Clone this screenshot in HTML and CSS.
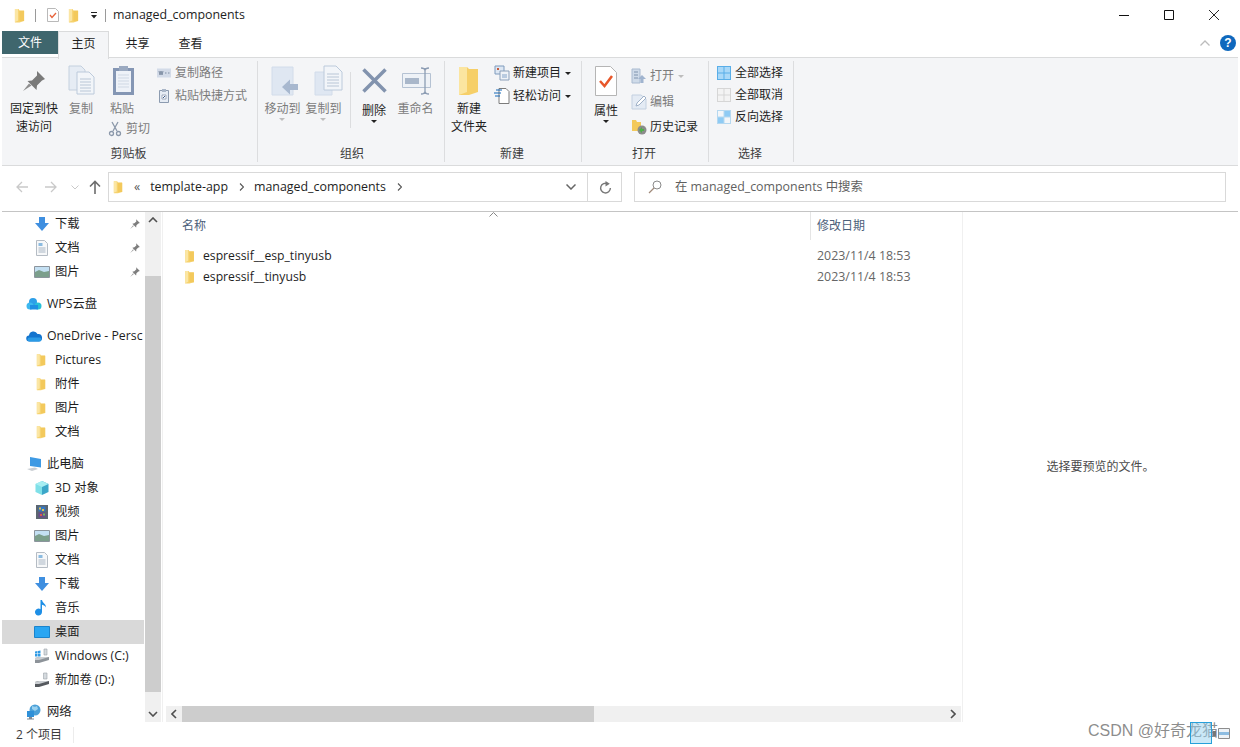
FILE: index.html
```html
<!DOCTYPE html>
<html lang="zh-CN">
<head>
  <meta charset="UTF-8">
  <title>managed_components</title>
  <link rel="stylesheet" href="styles.css">
</head>
<body>
  <svg class="defs" width="0" height="0">
    <symbol id="folder" viewBox="0 0 12 16">
      <path d="M1 1h4l1 1.500h5v11.500l-5 1.500H1z" fill="#f6d26e"/>
      <path d="M1 1h3.500v12.500L1 15z" fill="#fbe6a4"/>
      <path d="M6 3h5v11H6z" fill="#f3c95c"/>
    </symbol>
    <symbol id="pin" viewBox="0 0 16 16">
      <path d="M9.500 1.500l5 5-2 .7-2.600 2.600-.4 2.700-5-5 2.700-.4 2.600-2.600z" fill="#7d7d7d"/>
      <path d="M5.500 9.500L1.500 14.500l5-4z" fill="#9a9a9a"/>
    </symbol>
    <symbol id="arrow-down" viewBox="0 0 16 16">
      <path d="M5 1h6v6h4l-7 8-7-8h4z" fill="#3f8fe0"/>
    </symbol>
    <symbol id="doc" viewBox="0 0 16 16">
      <path d="M2.500 .5h8l3 3v12h-11z" fill="#f7f8f9" stroke="#b5bcc4"/>
      <path d="M4.500 8h7M4.500 10h7M4.500 12h7" stroke="#a9b6c4"/>
      <path d="M4.500 3h4v3h-4z" fill="#8bbbe0"/>
    </symbol>
    <symbol id="picture" viewBox="0 0 16 16">
      <path d="M.5 2.500h15v11H.5z" fill="#e8eef3" stroke="#8c959d"/>
      <path d="M1 3h14v5H1z" fill="#c4e0f3"/>
      <path d="M1 8l4-2 5 2 5-1v6H1z" fill="#7c9f8c"/>
    </symbol>
    <symbol id="cloud-wps" viewBox="0 0 16 16">
      <circle cx="7" cy="6" r="4" fill="#2d9fe8"/>
      <circle cx="12" cy="10" r="3.500" fill="#28c0d8"/>
      <circle cx="4" cy="10" r="3.500" fill="#3db8f0"/>
      <path d="M4 9h8v4.500H4z" fill="#1f8fe3"/>
    </symbol>
    <symbol id="cloud-one" viewBox="0 0 16 16">
      <path d="M3.500 13.500a3 3 0 0 1-.5-6 4.500 4.500 0 0 1 8.500-1.500 3.800 3.800 0 0 1 1.500 7.500z" fill="#1475cf"/>
      <path d="M3.500 13.500a2 2 0 0 1 0-4h10.300a2 2 0 0 1-.8 4z" fill="#2b9be6"/>
    </symbol>
    <symbol id="pc" viewBox="0 0 16 16">
      <path d="M4 1l11 2v8.500L4 10z" fill="#3e9ae4"/>
      <path d="M1 13l8-1.500 3 1.500-6 2z" fill="#c9ced3"/>
    </symbol>
    <symbol id="cube" viewBox="0 0 16 16">
      <path d="M8 1l6.500 3v8L8 15z" fill="#3ba7c9"/>
      <path d="M8 1L1.500 4v8L8 15z" fill="#7fe0e8"/>
      <path d="M8 1l6.500 3L8 7 1.500 4z" fill="#a6eef2"/>
    </symbol>
    <symbol id="film" viewBox="0 0 16 16">
      <path d="M2 1h12v14H2z" fill="#5c6670"/>
      <path d="M4.500 2.500h7v5h-7z" fill="#3477c2"/>
      <path d="M4.500 8.500h7v5h-7z" fill="#6b4b8c"/>
      <path d="M5 3.500h2v2H5zM8 5h2v2H8z" fill="#e2c14a"/>
      <path d="M6 10h2v2H6z" fill="#d75a4a"/>
      <path d="M9 9.500h2v2H9z" fill="#6fbf5b"/>
    </symbol>
    <symbol id="note" viewBox="0 0 16 16">
      <path d="M8 0v12a3.500 3.500 0 1 1-1.500-2.800V0H8c.5 3 4 3.500 4 7.500-1-2-3-2.800-4-2.800" fill="#1e8fe6"/>
    </symbol>
    <symbol id="desktop" viewBox="0 0 16 16">
      <path d="M.5 2.500h15v11H.5z" fill="#2aa6f2" stroke="#1b84cc"/>
    </symbol>
    <symbol id="drive-c" viewBox="0 0 16 16">
      <path d="M1 3.500l2.500-.5v2.500H1zM4 3l2.500-.5v3H4zM1 6h2.500v2.500H1zM4 6h2.500v2.500H4z" fill="#2f9ae4"/>
      <path d="M10 1h3v6h-3z" fill="#d5dade" stroke="#9aa2a9" stroke-width=".6"/>
      <path d="M1 10l4-1h10v3L5 15H1z" fill="#8d9399"/>
      <path d="M1 10l4-1h10L5 12H1z" fill="#c9cdd1"/>
    </symbol>
    <symbol id="drive-d" viewBox="0 0 16 16">
      <path d="M9.500 1h3.500v6H9.500z" fill="#d5dade" stroke="#9aa2a9" stroke-width=".6"/>
      <path d="M1 10l4-1h10v3L5 15H1z" fill="#55595e"/>
      <path d="M1 10l4-1h10L5 12H1z" fill="#c9cdd1"/>
    </symbol>
    <symbol id="globe" viewBox="0 0 16 16">
      <circle cx="9" cy="6" r="5.500" fill="#4ba0d8"/>
      <path d="M6 2c2 1 4 1 5 0l1 3-3 2-3-2z" fill="#9ad1ef"/>
      <path d="M1 7h7v6H1z" fill="#2f90d8"/>
      <path d="M3 13h3v1.500H3zM1 14.500h7v1H1z" fill="#7f8a94"/>
    </symbol>
  </svg>

  <header class="titlebar">
    <svg class="qa-folder"><use href="#folder"/></svg>
    <span class="qa-sep"></span>
    <svg class="qa-check" viewBox="0 0 12 14">
      <path d="M.5.5h8l3 3v10H.5z" fill="#fff" stroke="#b9b9b9"/>
      <path d="M3 7l2 2.500L9 5" fill="none" stroke="#e8633a" stroke-width="1.300"/>
    </svg>
    <svg class="qa-folder gap-l"><use href="#folder"/></svg>
    <svg class="qa-drop" viewBox="0 0 8 8"><path d="M1 1h6v1H1zM1 4h6L4 7.500z" fill="#222"/></svg>
    <span class="qa-sep"></span>
    <span class="title">managed_components</span>
    <div class="winbtns">
      <svg viewBox="0 0 10 10"><path d="M0 5.500h10" stroke="#111"/></svg>
      <svg viewBox="0 0 10 10"><path d="M.5.5h9v9h-9z" fill="none" stroke="#111"/></svg>
      <svg viewBox="0 0 10 10"><path d="M0 0l10 10M10 0L0 10" stroke="#111" stroke-width=".9"/></svg>
    </div>
  </header>

  <nav class="tabs">
    <span class="tab tab-file">文件</span>
    <span class="tab tab-active">主页</span>
    <span class="tab">共享</span>
    <span class="tab">查看</span>
    <div class="tabs-right">
      <svg class="collapse" viewBox="0 0 10 6"><path d="M.5 5.500L5 1l4.500 4.500" fill="none" stroke="#bcbcbc" stroke-width="1.300"/></svg>
      <span class="help">?</span>
    </div>
  </nav>

  <section class="ribbon">
    <div class="group g-clip">
      <div class="group-body">
        <div class="big w-pin">
          <svg class="big-icon" viewBox="0 0 32 32">
            <path d="M19 6l8 8-3 1.500-5 5-.5 4.500-9-9 4.500-.5 5-5z" fill="#7a7a7a"/>
            <path d="M11 18.500L5 26l8.500-5.500z" fill="#8d8d8d"/>
          </svg>
          <span>固定到快<br>速访问</span>
        </div>
        <div class="big w-copy dim">
          <svg class="big-icon" viewBox="0 0 32 32">
            <path d="M4 1h12l4 4v20H4z" fill="#e6ecf4" stroke="#c4d0de"/>
            <path d="M12 7h12l5 5v17H12z" fill="#f2f5f9" stroke="#bccadb"/>
            <path d="M15 14h11M15 17h11M15 20h11M15 23h11M15 26h11" stroke="#b9c6d6"/>
          </svg>
          <span>复制</span>
        </div>
        <div class="paste-col">
          <div class="big w-paste dim">
            <svg class="big-icon" viewBox="0 0 32 32">
              <path d="M7 3h21v27H7z" fill="#8496b4"/>
              <path d="M10 6h15v21H10z" fill="#eef2f8"/>
              <path d="M12 10h11M12 13h11M12 16h11M12 19h11M12 22h11" stroke="#cfd8e4"/>
              <path d="M13 1h9v5h-9z" fill="#9aa9c0"/>
            </svg>
            <span>粘贴</span>
          </div>
          <div class="small dim cut">
            <svg viewBox="0 0 16 16"><path d="M5 1l5 9M11 1l-5 9" stroke="#8b98aa" stroke-width="1.300"/><circle cx="4.500" cy="12.500" r="2" fill="none" stroke="#8b98aa" stroke-width="1.300"/><circle cx="11.500" cy="12.500" r="2" fill="none" stroke="#8b98aa" stroke-width="1.300"/></svg>
            <span>剪切</span>
          </div>
        </div>
        <div class="small-col col-clip">
          <div class="small dim">
            <svg viewBox="0 0 16 16"><path d="M1 3.500h14v9H1z" fill="#d3dbe8"/><path d="M3 6l1 4 1-4 1 4 1-4M9 8h1.500M12 8h1.500" fill="none" stroke="#7f8ea3"/></svg>
            <span>复制路径</span>
          </div>
          <div class="small dim">
            <svg viewBox="0 0 16 16"><path d="M3.500 2.500h9v12h-9z" fill="#e6ecf4" stroke="#8c9bb0"/><path d="M6 1h4v3H6z" fill="#a9b6c8"/><path d="M6 7h4v4H6z" fill="#fff" stroke="#7f8ea3" stroke-width=".7"/><path d="M7 10l2-2" stroke="#3a5a8c"/></svg>
            <span>粘贴快捷方式</span>
          </div>
        </div>
      </div>
      <div class="group-label">剪贴板</div>
    </div>

    <div class="group g-org">
      <div class="group-body">
        <div class="big w-move dim">
          <svg class="big-icon" viewBox="0 0 32 32">
            <path d="M5 2h21v28H5z" fill="#dfe7f2" stroke="#d2dcea"/>
            <path d="M15 22l8-7.500v4.500h8v6h-8v4.500z" fill="#a8b8cf"/>
          </svg>
          <span>移动到<i class="caret caret-dim"></i></span>
        </div>
        <div class="big w-move dim">
          <svg class="big-icon" viewBox="0 0 32 32">
            <path d="M7 7h17v23H7z" fill="#dfe7f2" stroke="#d2dcea"/>
            <path d="M16 1h12l6 6v18H16z" fill="#f2f5f9" stroke="#bccadb"/>
            <path d="M19 9h12M19 12h12M19 15h12M19 18h12M19 21h12" stroke="#b9c6d6"/>
          </svg>
          <span>复制到<i class="caret caret-dim"></i></span>
        </div>
        <span class="vsep"></span>
        <div class="big w-del">
          <svg class="big-icon" viewBox="0 0 32 32"><path d="M5.500 4.500l22 22M27.500 4.500l-22 22" stroke="#8293ae" stroke-width="3.500"/></svg>
          <span>删除<i class="caret"></i></span>
        </div>
        <div class="big w-move w-rename dim">
          <svg class="big-icon" viewBox="0 0 32 32">
            <path d="M2.500 8.500h28v14h-28z" fill="#eef2f7" stroke="#b5c2d3"/>
            <path d="M5 13h14v6H5z" fill="#a9b7ca"/>
            <path d="M25 3v26M21 3c2 0 4 1 4 3 0-2 2-3 4-3M21 29c2 0 4-1 4-3 0 2 2 3 4 3" fill="none" stroke="#8d9db4" stroke-width="1.300"/>
          </svg>
          <span>重命名</span>
        </div>
      </div>
      <div class="group-label">组织</div>
    </div>

    <div class="group g-new">
      <div class="group-body">
        <div class="big w-new">
          <svg class="big-icon" viewBox="0 0 24 32">
            <path d="M2 2h8l2 2h9v23l-9 3H2z" fill="#f6cf68"/>
            <path d="M2 2h8v25l-8 3z" fill="#fbe5a0"/>
          </svg>
          <span>新建<br>文件夹</span>
        </div>
        <div class="small-col col-new">
          <div class="small">
            <svg viewBox="0 0 16 16"><path d="M1 1h9v8H1z" fill="#dde7f3" stroke="#7f9bbd"/><path d="M3 3h2v2H3z" fill="#c85a3a"/><path d="M6 6h9v9H6z" fill="#eef2f7" stroke="#8ba0ba"/><path d="M8 9h5v4H8z" fill="#b9cbe0"/></svg>
            <span>新建项目</span><i class="caret caret-side"></i>
          </div>
          <div class="small">
            <svg viewBox="0 0 16 16"><path d="M5 .5h7l3 3v12H5z" fill="#fff" stroke="#7c7c7c"/><path d="M0 5h7M1 8h5M2 2h6" stroke="#1569b8" stroke-width="1.200"/></svg>
            <span>轻松访问</span><i class="caret caret-side"></i>
          </div>
        </div>
      </div>
      <div class="group-label">新建</div>
    </div>

    <div class="group g-open">
      <div class="group-body">
        <div class="big w-prop">
          <svg class="big-icon" viewBox="0 0 24 32">
            <path d="M1.500 1.500h15l6 6v23h-21z" fill="#fff" stroke="#b5b5b5"/>
            <path d="M6 16l4.500 5L18 11" fill="none" stroke="#e8572a" stroke-width="2.500"/>
          </svg>
          <span>属性<i class="caret"></i></span>
        </div>
        <div class="small-col col-open">
          <div class="small dim">
            <svg viewBox="0 0 16 16"><path d="M1 1h8v14H1z" fill="#cfdbe9" stroke="#a9bad0"/><path d="M3 4h4M3 7h4M3 10h4" stroke="#7f93ad"/><path d="M11 7l4 4h-2.500v4h-3v-4H7z" fill="#a0b4cf"/></svg>
            <span>打开</span><i class="caret caret-side caret-dim"></i>
          </div>
          <div class="small dim">
            <svg viewBox="0 0 16 16"><path d="M1 1h9l5 4v10H1z" fill="#e4ebf4" stroke="#c3d0e0"/><path d="M5 12l1-3 7-7 2 2-7 7z" fill="#fff" stroke="#9fb1c8"/></svg>
            <span>编辑</span>
          </div>
          <div class="small">
            <svg viewBox="0 0 16 16"><path d="M1 1h4l1 2h4v9H1z" fill="#f3c95c"/><circle cx="11" cy="11" r="4.500" fill="#8c8c8c"/><path d="M8 11l3-3v2h2v2h-2v2z" fill="#4fb04a"/></svg>
            <span>历史记录</span>
          </div>
        </div>
      </div>
      <div class="group-label">打开</div>
    </div>

    <div class="group g-sel">
      <div class="group-body">
        <div class="small-col col-sel">
          <div class="small">
            <svg viewBox="0 0 14 14"><path d="M0 0h14v14H0z" fill="#59aee8"/><path d="M1 1h5.500v5.500H1zM7.500 1H13v5.500H7.500zM1 7.500h5.500V13H1zM7.500 7.500H13V13H7.500z" fill="#a9d8f8"/></svg>
            <span>全部选择</span>
          </div>
          <div class="small">
            <svg viewBox="0 0 14 14"><path d="M0 0h14v14H0z" fill="#d6d6d6"/><path d="M1 1h5.500v5.500H1zM7.500 1H13v5.500H7.500zM1 7.500h5.500V13H1zM7.500 7.500H13V13H7.500z" fill="#f3f3f3"/></svg>
            <span>全部取消</span>
          </div>
          <div class="small">
            <svg viewBox="0 0 14 14"><path d="M0 0h14v14H0z" fill="#b5d8f0"/><path d="M1 1h5.500v5.500H1zM7.500 7.500H13V13H7.500z" fill="#f3f6f9"/><path d="M7.500 1H13v5.500H7.500zM1 7.500h5.500V13H1z" fill="#8fcbf4"/></svg>
            <span>反向选择</span>
          </div>
        </div>
      </div>
      <div class="group-label">选择</div>
    </div>
  </section>

  <div class="addressbar">
    <svg class="nav nav-back" viewBox="0 0 12 12"><path d="M12 6H1M6 1L1 6l5 5" fill="none" stroke="#c9c9c9" stroke-width="1.300"/></svg>
    <svg class="nav nav-fwd" viewBox="0 0 12 12"><path d="M0 6h11M6 1l5 5-5 5" fill="none" stroke="#c9c9c9" stroke-width="1.300"/></svg>
    <svg class="nav nav-drop" viewBox="0 0 8 5"><path d="M.5.5L4 4 7.500.5" fill="none" stroke="#c9c9c9"/></svg>
    <svg class="nav nav-up" viewBox="0 0 12 14"><path d="M6 14V1.500M1 6.500l5-5 5 5" fill="none" stroke="#6d6d6d" stroke-width="1.600"/></svg>
    <div class="address">
      <svg class="crumb-folder"><use href="#folder"/></svg>
      <span class="crumb-more">«</span>
      <span>template-app</span>
      <svg class="crumb-sep" viewBox="0 0 5 8"><path d="M1 .5L4.500 4 1 7.500" fill="none" stroke="#555" stroke-width="1.100"/></svg>
      <span>managed_components</span>
      <svg class="crumb-sep" viewBox="0 0 5 8"><path d="M1 .5L4.500 4 1 7.500" fill="none" stroke="#555" stroke-width="1.100"/></svg>
      <svg class="addr-drop" viewBox="0 0 10 6"><path d="M.5.5L5 5 9.500.5" fill="none" stroke="#666" stroke-width="1.500"/></svg>
      <span class="addr-div"></span>
      <svg class="addr-refresh" viewBox="0 0 12 12"><path d="M10.500 6.500A4.500 4.500 0 1 1 8 2.500" fill="none" stroke="#777" stroke-width="1.300"/><path d="M6 0l4 2.500L6 5z" fill="#777"/></svg>
    </div>
    <div class="search">
      <svg viewBox="0 0 14 14"><circle cx="9" cy="5" r="4" fill="none" stroke="#8a8a8a"/><path d="M6 8l-5 5" stroke="#a08a7a" stroke-width="1.200"/></svg>
      <span>在 managed_components 中搜索</span>
    </div>
  </div>

  <main class="main">
    <aside class="tree">
      <ul class="tree-list">
        <li class="sub"><svg><use href="#arrow-down"/></svg>下载<svg class="tree-pin"><use href="#pin"/></svg></li>
        <li class="sub"><svg><use href="#doc"/></svg>文档<svg class="tree-pin"><use href="#pin"/></svg></li>
        <li class="sub"><svg><use href="#picture"/></svg>图片<svg class="tree-pin"><use href="#pin"/></svg></li>
        <li class="root"><svg><use href="#cloud-wps"/></svg>WPS云盘</li>
        <li class="root"><svg><use href="#cloud-one"/></svg>OneDrive - Persc</li>
        <li class="sub"><svg class="tree-folder"><use href="#folder"/></svg>Pictures</li>
        <li class="sub"><svg class="tree-folder"><use href="#folder"/></svg>附件</li>
        <li class="sub"><svg class="tree-folder"><use href="#folder"/></svg>图片</li>
        <li class="sub"><svg class="tree-folder"><use href="#folder"/></svg>文档</li>
        <li class="root"><svg><use href="#pc"/></svg>此电脑</li>
        <li class="sub"><svg><use href="#cube"/></svg>3D 对象</li>
        <li class="sub"><svg><use href="#film"/></svg>视频</li>
        <li class="sub"><svg><use href="#picture"/></svg>图片</li>
        <li class="sub"><svg><use href="#doc"/></svg>文档</li>
        <li class="sub"><svg><use href="#arrow-down"/></svg>下载</li>
        <li class="sub"><svg><use href="#note"/></svg>音乐</li>
        <li class="sub selected"><svg><use href="#desktop"/></svg>桌面</li>
        <li class="sub"><svg><use href="#drive-c"/></svg>Windows (C:)</li>
        <li class="sub"><svg><use href="#drive-d"/></svg>新加卷 (D:)</li>
        <li class="root"><svg><use href="#globe"/></svg>网络</li>
      </ul>
    </aside>
    <div class="vscroll">
      <span class="sb-btn"><svg viewBox="0 0 10 6"><path d="M1 5l4-4 4 4" fill="none" stroke="#505050" stroke-width="1.600"/></svg></span>
      <span class="vscroll-gap"></span>
      <span class="vscroll-thumb"></span>
      <span class="sb-btn"><svg viewBox="0 0 10 6"><path d="M1 1l4 4 4-4" fill="none" stroke="#505050" stroke-width="1.600"/></svg></span>
    </div>
    <div class="files">
      <div class="files-head">
        <span class="col-name">名称</span>
        <svg class="sort" viewBox="0 0 9 5"><path d="M.5 4.500L4.500.5l4 4" fill="none" stroke="#888"/></svg>
        <span class="col-date">修改日期</span>
      </div>
      <div class="files-rows">
        <div class="file"><svg><use href="#folder"/></svg><span class="file-name">espressif__esp_tinyusb</span><span class="file-date">2023/11/4 18:53</span></div>
        <div class="file"><svg><use href="#folder"/></svg><span class="file-name">espressif__tinyusb</span><span class="file-date">2023/11/4 18:53</span></div>
      </div>
      <div class="hscroll">
        <span class="sb-btn"><svg viewBox="0 0 6 10"><path d="M5 1L1 5l4 4" fill="none" stroke="#505050" stroke-width="1.600"/></svg></span>
        <span class="hscroll-thumb"></span>
        <span class="hscroll-gap"></span>
        <span class="sb-btn"><svg viewBox="0 0 6 10"><path d="M1 1l4 4-4 4" fill="none" stroke="#505050" stroke-width="1.600"/></svg></span>
      </div>
    </div>
    <div class="preview">选择要预览的文件。</div>
  </main>

  <footer class="status">
    <span class="count">2 个项目</span>
    <span class="status-div"></span>
  </footer>

  <div class="watermark">CSDN @好奇龙猫</div>
  <div class="view-toggle">
    <span class="toggle-on"></span>
    <svg viewBox="0 0 18 11"><path d="M1 3h3v5H1z" fill="#777"/><path d="M6.500.5h11v10h-11z" fill="#eef3f7" stroke="#8d8d8d"/><path d="M7 4h10v3H7z" fill="#8dbde2"/></svg>
  </div>
</body>
</html>
```

FILE: styles.css
```css
* {
  box-sizing: border-box;
}

html, body {
  height: 100%;
}

body {
  margin: 0;
  padding: 0 2px;
  display: flex;
  flex-direction: column;
  overflow: hidden;
  position: relative;
  background-color: white;
  color: #1e1e1e;
  font-family: "Open Sans", "Noto Sans CJK SC", sans-serif;
  font-size: 12px;
  line-height: 18px;
}

svg {
  display: block;
  flex: none;
}

.defs {
  position: absolute;
}

/* title bar */
.titlebar {
  height: 30px;
  flex: none;
  display: flex;
  align-items: center;
  padding-left: 12px;
}

.qa-folder {
  width: 11px;
  height: 15px;
}

.qa-folder.gap-l {
  margin-left: 9px;
}

.qa-sep {
  width: 1px;
  height: 13px;
  background-color: #9a9a9a;
  margin: 0 11px 0 10px;
}

.qa-check {
  width: 12px;
  height: 14px;
}

.qa-drop {
  width: 8px;
  height: 8px;
  margin-left: 11px;
}

.qa-drop + .qa-sep {
  margin: 0 7px 0 7px;
}

.title {
  font-size: 12.4px;
}

.winbtns {
  margin-left: auto;
  display: flex;
  gap: 35px;
  padding-right: 19px;
}

.winbtns svg {
  width: 10px;
  height: 10px;
}

/* tabs */
.tabs {
  height: 28px;
  flex: none;
  display: flex;
  align-items: stretch;
  border-bottom: 1px solid #dadbdc;
}

.tab {
  width: 53px;
  display: flex;
  align-items: center;
  justify-content: center;
}

.tab-file {
  width: 56px;
  height: 23px;
  margin-top: 1px;
  background-color: #3f666d;
  color: white;
}

.tab-active {
  width: 51px;
  height: 28px;
  margin-top: 1px;
  padding-bottom: 3px;
  background-color: #f4f5f7;
  border: 1px solid #dadbdc;
  border-bottom: none;
  z-index: 1;
  margin-right: 2px;
}

.tabs-right {
  margin-left: auto;
  display: flex;
  align-items: center;
  gap: 10px;
  padding: 0 2px 1px 0;
}

.collapse {
  width: 10px;
  height: 6px;
}

.help {
  width: 16px;
  height: 16px;
  border-radius: 50%;
  background-color: #0f68bd;
  color: white;
  font: bold 12px/16px "Liberation Sans", sans-serif;
  text-align: center;
}

/* ribbon */
.ribbon {
  height: 108px;
  flex: none;
  display: flex;
  background-color: #f4f5f7;
  border-bottom: 1px solid #dadbdc;
  padding-top: 3px;
}

.group {
  height: 101px;
  display: flex;
  flex-direction: column;
  border-right: 1px solid #dcdddf;
}

.group-body {
  flex: 1;
  display: flex;
  min-height: 0;
}

.group-label {
  height: 21px;
  text-align: center;
  color: #3c3c3c;
  line-height: 26px;
  padding-right: 2px;
}

.g-clip {
  width: 256px;
  padding-left: 6px;
}

.g-clip .group-label {
  padding-right: 8px;
}

.g-org {
  width: 187px;
  padding-left: 4px;
}

.g-new {
  width: 137px;
}

.g-open {
  width: 127px;
}

.g-sel {
  width: 85px;
}

.big {
  display: flex;
  flex-direction: column;
  align-items: center;
  text-align: center;
  flex: none;
}

.big-icon {
  width: 32px;
  height: 32px;
  margin: 4px 0 3px;
  overflow: visible;
}

.dim {
  color: #7c7c7c;
}

.w-pin {
  width: 52px;
}

.w-copy {
  width: 42px;
}

.w-paste {
  width: 40px;
}

.w-move {
  width: 41px;
}

.w-del {
  width: 36px;
}

.w-del .big-icon {
  margin-bottom: 5px;
}

.w-rename {
  margin-left: 3px;
}

.w-new {
  width: 46px;
  margin-left: 1px;
}

.w-new .big-icon {
  width: 24px;
}

.w-prop {
  width: 46px;
  margin-left: 1px;
}

.w-prop .big-icon {
  width: 24px;
  height: 32px;
  margin-bottom: 5px;
}

.paste-col {
  width: 50px;
  flex: none;
}

.cut {
  margin: 2px 0 0 5px;
  white-space: nowrap;
}

.vsep {
  width: 1px;
  height: 56px;
  margin: 11px 5px 0 6px;
  background-color: #dcdddf;
  flex: none;
}

.small-col {
  display: flex;
  flex-direction: column;
  padding-top: 1px;
  gap: 5px;
  white-space: nowrap;
}

.col-clip {
  margin-left: 4px;
  padding-top: 3px;
}

.col-new {
  margin-left: 2px;
  padding-top: 3px;
}

.col-open {
  margin-left: 2px;
  padding-top: 6px;
  gap: 7.5px;
}

.col-sel {
  margin-left: 8px;
  gap: 4px;
  padding-top: 3px;
}

.small {
  display: flex;
  align-items: center;
  gap: 3px;
  height: 18px;
}

.small svg {
  width: 16px;
  height: 16px;
}

.col-sel .small svg {
  width: 14px;
  height: 14px;
  margin-right: 1px;
}

.caret {
  display: block;
  width: 0;
  height: 0;
  margin: 0 auto;
  border: 3px solid transparent;
  border-top-color: #222;
  border-bottom: none;
}

.caret-dim {
  border-top-color: #bdbdbd;
}

.caret-side {
  margin: 0 0 0 1px;
}

/* address bar */
.addressbar {
  height: 46px;
  flex: none;
  display: flex;
  align-items: center;
  border-bottom: 1px solid #c4c4c4;
  padding-bottom: 3px;
}

.nav {
  flex: none;
}

.nav-back {
  width: 12px;
  height: 12px;
  margin-left: 14px;
}

.nav-fwd {
  width: 12px;
  height: 12px;
  margin-left: 17px;
}

.nav-drop {
  width: 8px;
  height: 5px;
  margin-left: 14px;
}

.nav-up {
  width: 12px;
  height: 14px;
  margin-left: 10px;
}

.address {
  width: 514px;
  height: 30px;
  margin-left: 7px;
  display: flex;
  align-items: center;
  border: 1px solid #d9d9d9;
  padding-left: 4px;
  font-size: 12.4px;
  line-height: 16px;
}

.crumb-folder {
  width: 10px;
  height: 14px;
}

.crumb-more {
  margin: 0 10px 0 11px;
  color: #555;
}

.crumb-sep {
  width: 5px;
  height: 8px;
  margin: 0 10px 0 11px;
}

.addr-drop {
  width: 10px;
  height: 6px;
  margin-left: auto;
}

.addr-div {
  width: 1px;
  height: 28px;
  background-color: #d9d9d9;
  margin: 0 11px;
}

.addr-refresh {
  width: 13px;
  height: 13px;
  margin-right: 9px;
}

.search {
  width: 592px;
  height: 30px;
  margin-left: 12px;
  display: flex;
  align-items: center;
  gap: 13px;
  border: 1px solid #d9d9d9;
  padding-left: 13px;
  color: #5f5f5f;
  font-size: 12.4px;
}

.search svg {
  width: 14px;
  height: 14px;
}

/* main area */
.main {
  flex: 1;
  min-height: 0;
  display: flex;
}

.tree {
  width: 142px;
  flex: none;
  overflow: hidden;
}

.tree-list {
  list-style: none;
  margin: 0;
  padding: 0;
  font-size: 12.3px;
}

.tree-list li {
  height: 24px;
  display: flex;
  align-items: center;
  white-space: nowrap;
}

.tree-list .sub {
  padding-left: 32px;
}

.tree-list .root {
  padding-left: 24px;
  margin-top: 8px;
}

.tree-list svg {
  width: 16px;
  height: 16px;
  margin-right: 5px;
}

.tree-list .tree-folder {
  width: 10px;
  height: 14px;
  margin: 0 9px 0 2px;
}

.tree-list .tree-pin {
  width: 12px;
  height: 12px;
  margin: 0 3px 0 auto;
}

.tree-list .selected {
  background-color: #d9d9d9;
}

.vscroll {
  width: 16px;
  flex: none;
  margin-left: 1px;
  display: flex;
  flex-direction: column;
  background-color: #f0f0f0;
}

.sb-btn {
  width: 16px;
  height: 16px;
  flex: none;
  display: flex;
  align-items: center;
  justify-content: center;
  background-color: #f0f0f0;
}

.vscroll .sb-btn svg {
  width: 10px;
  height: 6px;
}

.vscroll-gap {
  height: 48px;
}

.vscroll-thumb {
  flex: 1;
  background-color: #cdcdcd;
  margin-bottom: 14px;
}

.files {
  width: 800px;
  flex: none;
  margin-left: 1px;
  display: flex;
  flex-direction: column;
  border-left: 1px solid #f0f0f0;
}

.files-head {
  height: 28px;
  flex: none;
  display: flex;
  align-items: center;
  position: relative;
  color: #4c607a;
}

.col-name {
  width: 648px;
  padding-left: 19px;
  border-right: 1px solid #e5e5e5;
  height: 28px;
  line-height: 27px;
}

.col-date {
  padding-left: 6px;
}

.sort {
  position: absolute;
  left: 326px;
  top: 0;
  width: 9px;
  height: 5px;
}

.files-rows {
  flex: 1;
  padding-top: 5px;
}

.file {
  height: 21px;
  display: flex;
  align-items: center;
  padding-left: 21px;
}

.file svg {
  width: 11px;
  height: 14px;
}

.file-name {
  width: 622px;
  padding-left: 8px;
  font-size: 12.2px;
}

.file-date {
  color: #666;
  font-size: 12.4px;
}

.hscroll {
  height: 16px;
  flex: none;
  display: flex;
  margin-left: 3px;
  margin-right: 1px;
  background-color: #f0f0f0;
}

.hscroll .sb-btn svg {
  width: 6px;
  height: 10px;
}

.hscroll-thumb {
  width: 412px;
  background-color: #cdcdcd;
}

.hscroll-gap {
  flex: 1;
}

.preview {
  flex: 1;
  display: flex;
  align-items: center;
  justify-content: center;
  color: #4a4a4a;
  border-left: 1px solid #f0f0f0;
}

/* status bar */
.status {
  height: 25px;
  flex: none;
  display: flex;
  align-items: center;
  padding-left: 14px;
  color: #3c3c3c;
}

.status-div {
  width: 1px;
  height: 16px;
  background-color: #ececec;
  margin-left: 11px;
}

/* overlays */
.watermark {
  position: absolute;
  left: 1088px;
  top: 720px;
  font-family: "Liberation Sans", "Noto Sans CJK SC", sans-serif;
  font-size: 16px;
  line-height: 22px;
  color: rgba(110, 110, 110, 0.8);
  white-space: nowrap;
}

.view-toggle {
  position: absolute;
  left: 1190px;
  top: 722px;
  display: flex;
  align-items: center;
}

.toggle-on {
  width: 22px;
  height: 22px;
  border: 1px solid #26a0da;
  background-color: rgba(150, 210, 240, 0.5);
}

.view-toggle svg {
  width: 18px;
  height: 11px;
}
```
